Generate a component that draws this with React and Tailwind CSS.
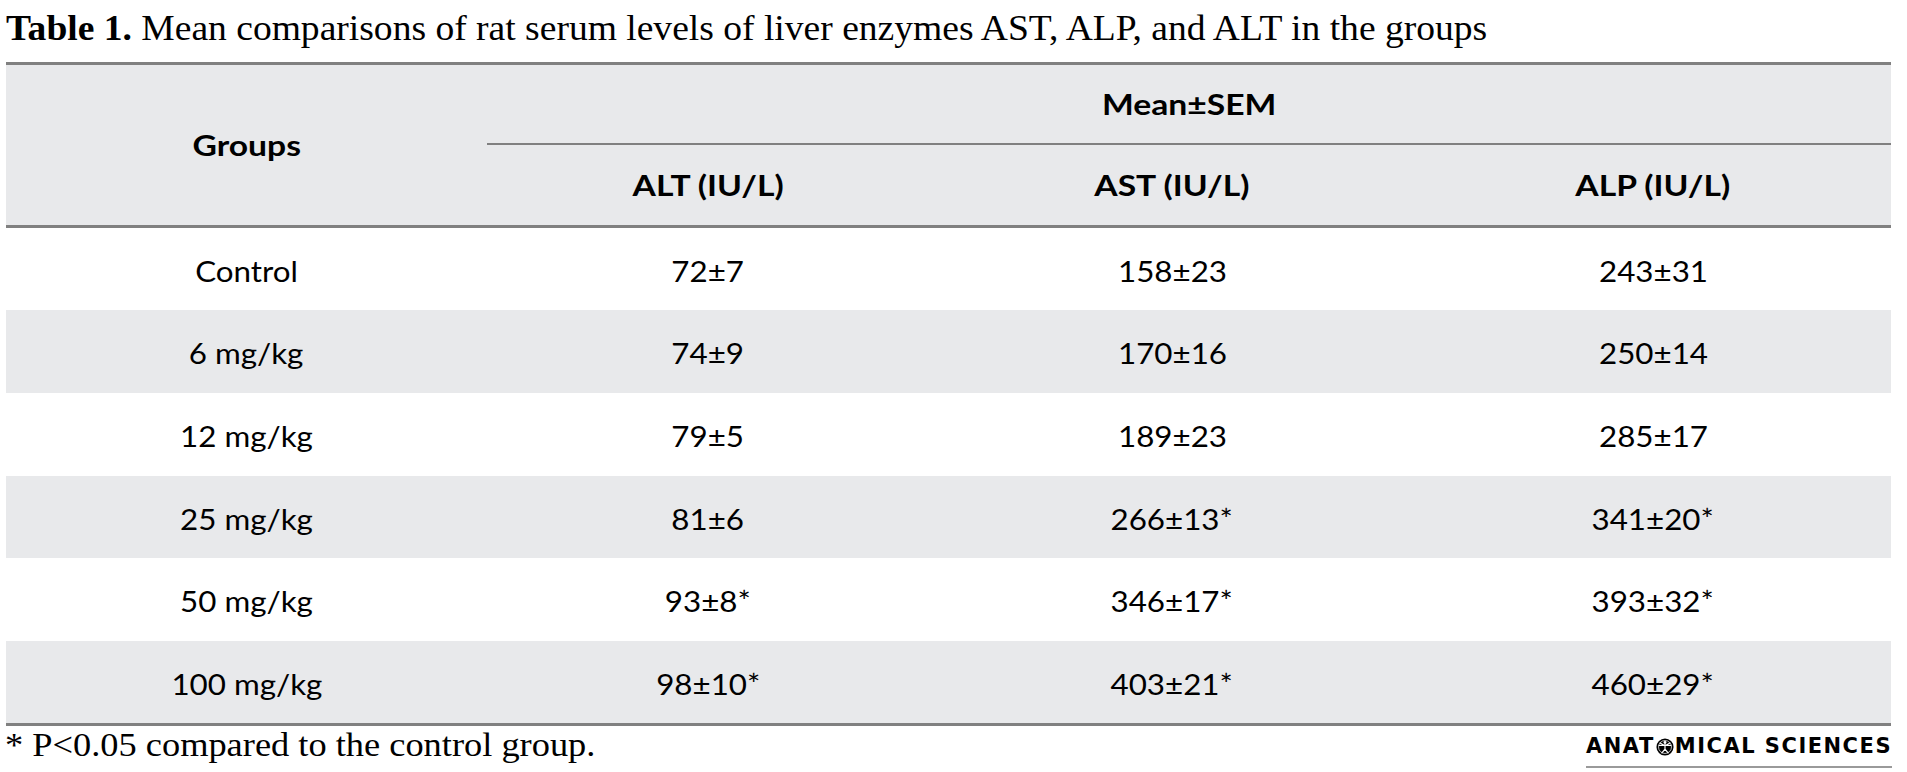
import React from "react";

const rows = [
  ["Control", "72±7", "158±23", "243±31"],
  ["6 mg/kg", "74±9", "170±16", "250±14"],
  ["12 mg/kg", "79±5", "189±23", "285±17"],
  ["25 mg/kg", "81±6", "266±13*", "341±20*"],
  ["50 mg/kg", "93±8*", "346±17*", "393±32*"],
  ["100 mg/kg", "98±10*", "403±21*", "460±29*"],
];

const rowClasses = [
  "h-[82px] bg-white",
  "h-[83px] bg-[#e8e9eb]",
  "h-[83px] bg-white",
  "h-[82px] bg-[#e8e9eb]",
  "h-[83px] bg-white",
  "h-[82px] bg-[#e8e9eb]",
];

function Vitruvian() {
  return (
    <svg width="18" height="18" viewBox="0 0 20 20" className="mx-[1px]">
      <circle cx="10" cy="10" r="9.5" fill="#000" />
      <circle cx="10" cy="10" r="7.2" fill="none" stroke="#fff" strokeWidth="0.8" />
      <circle cx="10" cy="5" r="1.6" fill="#fff" />
      <path d="M3.5 8.2 L16.5 8.2 M10 6.5 L10 12.5 M10 12.5 L6.5 16.5 M10 12.5 L13.5 16.5 M4.5 5.5 L10 8.5 L15.5 5.5" stroke="#fff" strokeWidth="1.3" fill="none" strokeLinecap="round" />
    </svg>
  );
}

function H({ children }) {
  return <span className="inline-block scale-x-[1.16] whitespace-nowrap">{children}</span>;
}

function D({ children }) {
  return <span className="inline-block scale-x-[1.08] whitespace-nowrap">{children}</span>;
}

export default function App() {
  return (
    <div className="w-[1907px] h-[772px] bg-white text-black overflow-hidden">
      <div className="h-[62px] pl-[6px] pt-[11px] text-[35px] leading-[35px] font-['Liberation_Serif',serif] whitespace-nowrap">
        <span className="inline-block origin-left scale-x-[1.073]">
          <span className="font-bold">Table 1.</span> Mean comparisons of rat serum levels of liver enzymes AST, ALP, and ALT in the groups
        </span>
      </div>

      <div className="ml-[6px] w-[1885px] border-t-[3px] border-b-[3px] border-[#808080] font-['Lato',sans-serif]">
        <div className="flex h-[163px] bg-[#e8e9eb] border-b-[3px] border-[#808080]">
          <div className="w-[481px] flex items-center justify-center text-[29px] font-bold">
            <H>Groups</H>
          </div>
          <div className="flex-1 flex flex-col">
            <div className="h-[80px] border-b-2 border-[#808080] flex items-center justify-center text-[29px] font-bold">
              <H>Mean±SEM</H>
            </div>
            <div className="h-[80px] grid grid-cols-[442px_486px_476px] text-[29px] font-bold">
              <div className="flex items-center justify-center"><H>ALT (IU/L)</H></div>
              <div className="flex items-center justify-center"><H>AST (IU/L)</H></div>
              <div className="flex items-center justify-center"><H>ALP (IU/L)</H></div>
            </div>
          </div>
        </div>
        {rows.map((r, i) => (
          <div key={i} className={`grid grid-cols-[481px_442px_486px_476px] text-[29px] ${rowClasses[i]}`}>
            {r.map((c, j) => (
              <div key={j} className="flex items-center justify-center pt-[3px]">
                <D>{c}</D>
              </div>
            ))}
          </div>
        ))}
      </div>

      <div className="flex justify-between w-[1892px] pl-[5px]">
        <div className="pt-[2px] text-[34px] leading-[34px] font-['Liberation_Serif',serif] whitespace-nowrap">
          <span className="inline-block origin-left scale-x-[1.07]">* P&lt;0.05 compared to the control group.</span>
        </div>
        <div className="pt-[10px] flex flex-col items-stretch">
          <div className="flex items-center text-[21px] leading-[21px] font-bold font-['DejaVu_Sans',sans-serif] tracking-[1.5px] whitespace-nowrap">
            <span>ANAT</span>
            <Vitruvian />
            <span>MICAL SCIENCES</span>
          </div>
          <div className="mt-[9px] h-[2px] bg-[#9a9a9a]" />
        </div>
      </div>
    </div>
  );
}
